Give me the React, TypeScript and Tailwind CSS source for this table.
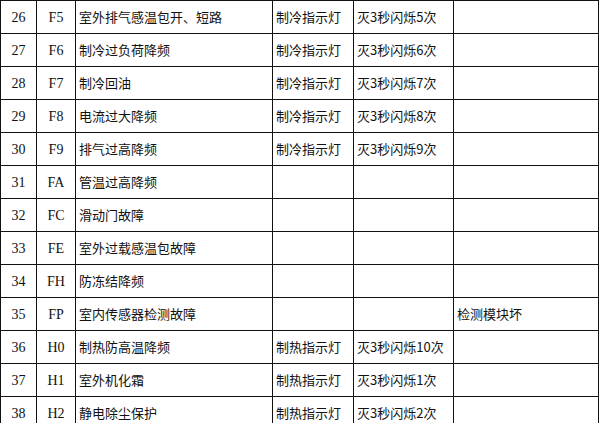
import React from "react";

type Row = {
  no: string;
  code: string;
  name: string;
  lamp: string;
  blink: string;
  note: string;
};

const rows: Row[] = [
  { no: "26", code: "F5", name: "室外排气感温包开、短路", lamp: "制冷指示灯", blink: "灭3秒闪烁5次", note: "" },
  { no: "27", code: "F6", name: "制冷过负荷降频", lamp: "制冷指示灯", blink: "灭3秒闪烁6次", note: "" },
  { no: "28", code: "F7", name: "制冷回油", lamp: "制冷指示灯", blink: "灭3秒闪烁7次", note: "" },
  { no: "29", code: "F8", name: "电流过大降频", lamp: "制冷指示灯", blink: "灭3秒闪烁8次", note: "" },
  { no: "30", code: "F9", name: "排气过高降频", lamp: "制冷指示灯", blink: "灭3秒闪烁9次", note: "" },
  { no: "31", code: "FA", name: "管温过高降频", lamp: "", blink: "", note: "" },
  { no: "32", code: "FC", name: "滑动门故障", lamp: "", blink: "", note: "" },
  { no: "33", code: "FE", name: "室外过载感温包故障", lamp: "", blink: "", note: "" },
  { no: "34", code: "FH", name: "防冻结降频", lamp: "", blink: "", note: "" },
  { no: "35", code: "FP", name: "室内传感器检测故障", lamp: "", blink: "", note: "检测模块坏" },
  { no: "36", code: "H0", name: "制热防高温降频", lamp: "制热指示灯", blink: "灭3秒闪烁10次", note: "" },
  { no: "37", code: "H1", name: "室外机化霜", lamp: "制热指示灯", blink: "灭3秒闪烁1次", note: "" },
  { no: "38", code: "H2", name: "静电除尘保护", lamp: "制热指示灯", blink: "灭3秒闪烁2次", note: "" },
];

const cjk = "font-['Noto_Sans_CJK_SC',sans-serif] text-[13px]";
const serif = "font-['Liberation_Serif','Noto_Sans_CJK_SC',serif] text-[14px]";

export default function App() {
  return (
    <div className="w-[600px] h-[423px] overflow-hidden bg-white text-[#111]">
      <div className="w-[599px] border-t border-l border-[#111]">
        {rows.map((r) => (
          <div key={r.no} className="flex h-[33px] border-b border-[#111]">
            <div className={`w-[36px] shrink-0 border-r border-[#111] flex items-center justify-center ${serif}`}>
              {r.no}
            </div>
            <div className={`w-[39px] shrink-0 border-r border-[#111] flex items-center justify-center ${serif}`}>
              {r.code}
            </div>
            <div className={`w-[197px] shrink-0 border-r border-[#111] flex items-center pl-[3px] ${cjk}`}>
              {r.name}
            </div>
            <div className={`w-[81px] shrink-0 border-r border-[#111] flex items-center pl-[3px] ${cjk}`}>
              {r.lamp}
            </div>
            <div className={`w-[100px] shrink-0 border-r border-[#111] flex items-center pl-[3px] ${cjk}`}>
              {r.blink}
            </div>
            <div className={`w-[145px] shrink-0 border-r border-[#111] flex items-center pl-[3px] ${cjk}`}>
              {r.note}
            </div>
          </div>
        ))}
      </div>
    </div>
  );
}
